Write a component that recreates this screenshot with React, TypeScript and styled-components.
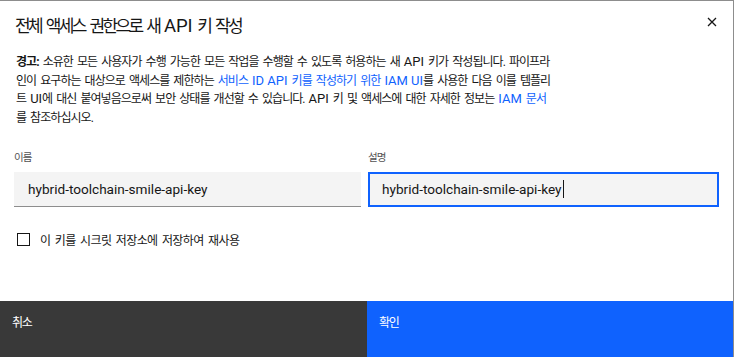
import React from "react";
import styled, { createGlobalStyle } from "styled-components";

const GlobalStyle = createGlobalStyle`
  html, body { margin: 0; padding: 0; background: #ffffff; }
  body { font-family: "Roboto", "Noto Sans CJK KR", sans-serif; color: #161616; }
  * { box-sizing: border-box; }
`;

const Modal = styled.div`
  width: 734px;
  height: 357px;
  border-top: 1px solid #8d8d8d;
  border-right: 1px solid #8d8d8d;
  background: #ffffff;
  display: flex;
  flex-direction: column;
  overflow: hidden;
`;

const Header = styled.header`
  display: flex;
  align-items: flex-start;
  justify-content: space-between;
  padding: 14px 13px 0 15px;
`;

const Title = styled.h2`
  margin: 0;
  font-weight: 400;
  font-size: 17px;
  letter-spacing: -2.6px;
  word-spacing: 3px;
  line-height: 23px;
  color: #161616;
`;

const Latin = styled.span<{ $size: number }>`
  font-family: "Roboto", sans-serif;
  font-size: ${(p) => p.$size}px;
  letter-spacing: 0;
  word-spacing: 0;
`;

const CloseButton = styled.button`
  width: 16px;
  height: 14px;
  padding: 0;
  border: none;
  background: none;
  display: flex;
  align-items: center;
  justify-content: center;
  color: #161616;
  cursor: pointer;
`;

const Description = styled.p`
  margin: 15px 0 0;
  padding: 0 15px 0 16px;
  font-size: 12px;
  letter-spacing: -0.95px;
  word-spacing: 2px;
  line-height: 18.7px;
  white-space: nowrap;
  color: #161616;
`;

const Warn = styled.strong`
  font-weight: 700;
`;

const Link = styled.a`
  color: #0f62fe;
  text-decoration: none;
`;

const FormRow = styled.div`
  display: grid;
  grid-template-columns: 347px 351px;
  column-gap: 7px;
  padding: 0 15px 0 14px;
  margin-top: 22px;
`;

const FormItem = styled.div`
  display: flex;
  flex-direction: column;
`;

const Label = styled.label`
  font-size: 10.5px;
  letter-spacing: -1px;
  line-height: 15px;
  color: #525252;
  margin-bottom: 7px;
`;

const Field = styled.div<{ $focused?: boolean }>`
  height: 35px;
  display: flex;
  align-items: center;
  padding: 0 14px;
  background: #f4f4f4;
  border-bottom: 1px solid #8d8d8d;
  font-family: "Roboto", sans-serif;
  font-size: 13.6px;
  color: #161616;
  outline: ${(p) => (p.$focused ? "2px solid #0f62fe" : "none")};
  outline-offset: -2px;
`;

const Caret = styled.span`
  display: inline-block;
  width: 1px;
  height: 18px;
  margin-left: 1px;
  background: #161616;
`;

const CheckRow = styled.label`
  display: flex;
  align-items: center;
  gap: 10px;
  height: 18px;
  margin-top: 24px;
  padding-left: 17px;
  font-size: 12px;
  letter-spacing: -0.6px;
  word-spacing: 2px;
  color: #161616;
`;

const Box = styled.span`
  width: 13px;
  height: 13px;
  border: 1px solid #161616;
  background: #ffffff;
`;

const Footer = styled.footer`
  margin-top: auto;
  display: grid;
  grid-template-columns: 367px 1fr;
  height: 56px;
`;

const FooterButton = styled.button<{ $primary?: boolean }>`
  border: none;
  margin: 0;
  display: flex;
  align-items: flex-start;
  padding: 13px 12px;
  font-family: "Roboto", "Noto Sans CJK KR", sans-serif;
  font-size: 12px;
  letter-spacing: -1.2px;
  line-height: 18px;
  color: #ffffff;
  background: ${(p) => (p.$primary ? "#0f62fe" : "#393939")};
  cursor: pointer;
`;

export default function App() {
  return (
    <>
      <GlobalStyle />
      <Modal>
        <Header>
          <Title>
            전체 액세스 권한으로 새 <Latin $size={18.5}>API</Latin> 키 작성
          </Title>
          <CloseButton aria-label="닫기">
            <svg width="10" height="10" viewBox="0 0 10 10">
              <path d="M1 1 L9 9 M9 1 L1 9" stroke="#161616" strokeWidth="1.3" fill="none" />
            </svg>
          </CloseButton>
        </Header>
        <Description>
          <Warn>경고:</Warn> 소유한 모든 사용자가 수행 가능한 모든 작업을 수행할 수 있도록 허용하는 새{" "}
          <Latin $size={13}>API</Latin> 키가 작성됩니다. 파이프라
          <br />
          인이 요구하는 대상으로 액세스를 제한하는{" "}
          <Link href="#">
            서비스 <Latin $size={13}>ID API</Latin> 키를 작성하기 위한 <Latin $size={13}>IAM UI</Latin>
          </Link>
          를 사용한 다음 이를 템플리
          <br />트 <Latin $size={13}>UI</Latin>에 대신 붙여넣음으로써 보안 상태를 개선할 수 있습니다.{" "}
          <Latin $size={13}>API</Latin> 키 및 액세스에 대한 자세한 정보는{" "}
          <Link href="#">
            <Latin $size={13}>IAM</Latin> 문서
          </Link>
          <br />를 참조하십시오.
        </Description>
        <FormRow>
          <FormItem>
            <Label>이름</Label>
            <Field>hybrid-toolchain-smile-api-key</Field>
          </FormItem>
          <FormItem>
            <Label>설명</Label>
            <Field $focused>
              hybrid-toolchain-smile-api-key
              <Caret />
            </Field>
          </FormItem>
        </FormRow>
        <CheckRow>
          <Box />이 키를 시크릿 저장소에 저장하여 재사용
        </CheckRow>
        <Footer>
          <FooterButton>취소</FooterButton>
          <FooterButton $primary>확인</FooterButton>
        </Footer>
      </Modal>
    </>
  );
}
